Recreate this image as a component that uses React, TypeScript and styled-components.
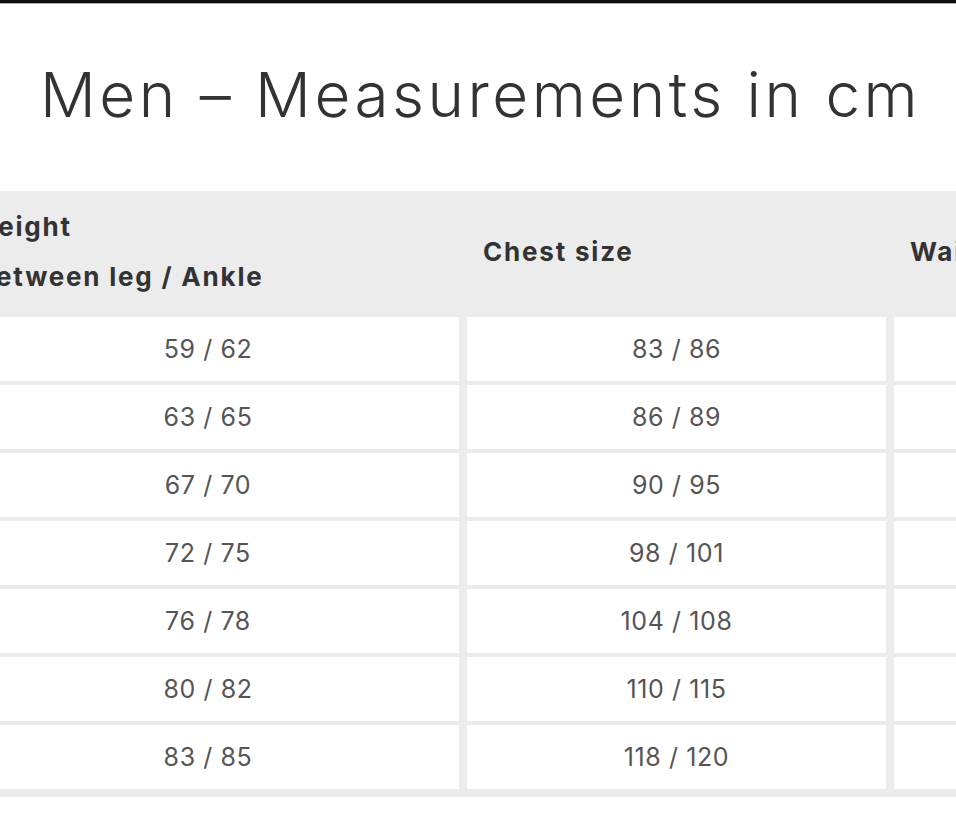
import React from "react";
import styled, { createGlobalStyle } from "styled-components";

const Global = createGlobalStyle`
  html, body { margin: 0; padding: 0; background: #ffffff; }
  body { overflow: hidden; font-family: "Inter", "Open Sans", sans-serif; }
`;

const Page = styled.div`
  width: 956px;
  height: 838px;
  overflow: hidden;
  border-top: 3px solid #0d0d0d;
  box-sizing: border-box;
`;

const TopRule = styled.div`
  height: 1px;
  background: #b5b5b5;
`;

const Title = styled.h1`
  margin: 0;
  padding: 53px 0 0 40px;
  height: 187px;
  box-sizing: border-box;
  font-family: "Inter", "Open Sans", sans-serif;
  font-weight: 300;
  font-size: 62px;
  line-height: 76px;
  color: #333333;
  white-space: nowrap;
  letter-spacing: 3.5px;
`;

const Table = styled.div`
  display: grid;
  grid-template-columns: 502px 419px 419px;
  column-gap: 8px;
  row-gap: 4px;
  margin-left: -43px;
  width: max-content;
  background: #ececec;
  padding-bottom: 8px;
`;

const HeadCell = styled.div<{ $pad?: number }>`
  height: 122px;
  display: flex;
  align-items: center;
  padding-left: ${(p) => p.$pad ?? 16}px;
  font-family: "Inter", "Open Sans", sans-serif;
  font-weight: 700;
  font-size: 26px;
  line-height: 50px;
  letter-spacing: 1.8px;
  color: #333333;
  white-space: nowrap;
`;

const Cell = styled.div`
  height: 64px;
  background: #ffffff;
  display: flex;
  align-items: center;
  justify-content: center;
  font-family: "Inter", "Open Sans", sans-serif;
  font-weight: 400;
  font-size: 25px;
  letter-spacing: 0.6px;
  color: #555555;
`;

const rows: [string, string][] = [
  ["59 / 62", "83 / 86"],
  ["63 / 65", "86 / 89"],
  ["67 / 70", "90 / 95"],
  ["72 / 75", "98 / 101"],
  ["76 / 78", "104 / 108"],
  ["80 / 82", "110 / 115"],
  ["83 / 85", "118 / 120"],
];

export default function App() {
  return (
    <Page>
      <Global />
      <TopRule />
      <Title>Men – Measurements in cm</Title>
      <Table>
        <HeadCell $pad={20}>
          <div>
            Height
            <br />
            Between leg / Ankle
          </div>
        </HeadCell>
        <HeadCell>Chest size</HeadCell>
        <HeadCell>Waist size</HeadCell>
        {rows.map(([a, b], i) => (
          <React.Fragment key={i}>
            <Cell>{a}</Cell>
            <Cell>{b}</Cell>
            <Cell />
          </React.Fragment>
        ))}
      </Table>
    </Page>
  );
}
